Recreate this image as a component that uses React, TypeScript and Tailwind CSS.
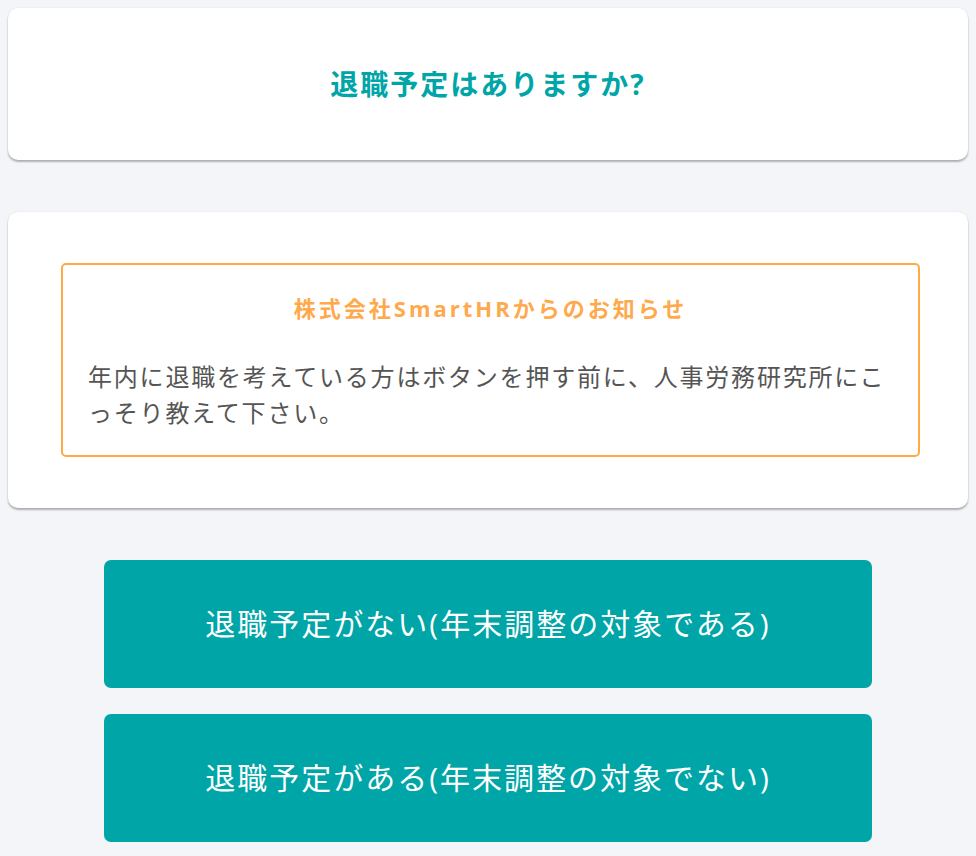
import React from "react";

const font = { fontFamily: '"Open Sans", "Noto Sans CJK JP", sans-serif' };

export default function App() {
  return (
    <div
      className="min-h-[856px] w-full bg-[#f4f5f9] px-2 pt-2 pb-4 flex flex-col"
      style={font}
    >
      <div className="h-[152px] rounded-[10px] bg-white shadow-[0_2px_2px_rgba(0,0,0,0.28),0_0_2px_rgba(0,0,0,0.08)] flex items-center justify-center">
        <h1 className="text-[28px] font-bold text-[#00a5a8] tracking-[2px] leading-none">
          退職予定はありますか?
        </h1>
      </div>

      <div className="mt-[52px] rounded-[10px] bg-white shadow-[0_2px_2px_rgba(0,0,0,0.28),0_0_2px_rgba(0,0,0,0.08)] pl-[53px] pr-[48px] py-[51px]">
        <div className="h-[194px] rounded-[5px] border-2 border-[#ffab45] px-[25px] pt-[25px]">
          <p className="text-center text-[22px] font-bold text-[#ffa94d] tracking-[3px] leading-[36px]">
            株式会社SmartHRからのお知らせ
          </p>
          <p className="mt-[33px] text-[24px] text-[#555555] tracking-[1.8px] leading-[36px]">
            年内に退職を考えている方はボタンを押す前に、人事労務研究所にこっそり教えて下さい。
          </p>
        </div>
      </div>

      <div className="mt-[52px] flex flex-col items-center gap-[26px]">
        <button className="w-[768px] h-[128px] rounded-[7px] bg-[#00a5a8] text-white text-[30px] tracking-[2px] leading-none">
          退職予定がない(年末調整の対象である)
        </button>
        <button className="w-[768px] h-[128px] rounded-[7px] bg-[#00a5a8] text-white text-[30px] tracking-[2px] leading-none">
          退職予定がある(年末調整の対象でない)
        </button>
      </div>
    </div>
  );
}
